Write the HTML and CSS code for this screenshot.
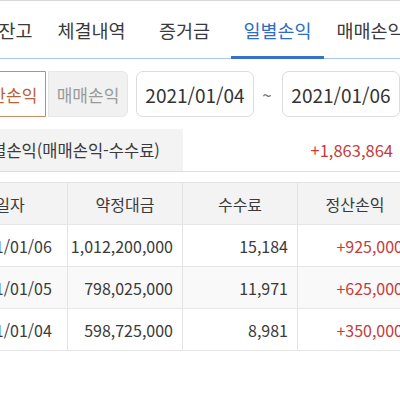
FILE: index.html
```html
<!DOCTYPE html>
<html lang="ko">
<head>
<meta charset="utf-8">
<link rel="stylesheet" href="styles.css">
</head>
<body>
<div class="page">
  <nav class="tabs">
    <div class="tab">주식잔고</div>
    <div class="tab">체결내역</div>
    <div class="tab">증거금</div>
    <div class="tab active">일별손익</div>
    <div class="tab">매매손익</div>
  </nav>
  <div class="filters">
    <div class="seg">
      <div class="seg-btn on">정산손익</div>
      <div class="seg-btn off">매매손익</div>
    </div>
    <div class="date">2021/01/04</div>
    <div class="tilde">~</div>
    <div class="date">2021/01/06</div>
  </div>
  <div class="summary">
    <div class="sum-label">일별손익(매매손익-수수료)</div>
    <div class="sum-value">+1,863,864</div>
  </div>
  <div class="table">
    <div class="row head">
      <div class="c center">일자</div>
      <div class="c center">약정대금</div>
      <div class="c center">수수료</div>
      <div class="c center">정산손익</div>
    </div>
    <div class="row">
      <div class="c center">2021/01/06</div>
      <div class="c num">1,012,200,000</div>
      <div class="c num">15,184</div>
      <div class="c num red">+925,000</div>
    </div>
    <div class="row alt">
      <div class="c center">2021/01/05</div>
      <div class="c num">798,025,000</div>
      <div class="c num">11,971</div>
      <div class="c num red">+625,000</div>
    </div>
    <div class="row">
      <div class="c center">2021/01/04</div>
      <div class="c num">598,725,000</div>
      <div class="c num">8,981</div>
      <div class="c num red">+350,000</div>
    </div>
  </div>
</div>
</body>
</html>
```
FILE: styles.css
```css
html, body {
  margin: 0;
  padding: 0;
  background: #fff;
  overflow: hidden;
}
body {
  font-family: "Noto Sans CJK KR", "Noto Sans", sans-serif;
  color: #3a3a3a;
  width: 400px;
  height: 400px;
}
.page {
  margin-left: -48px;
  width: 470px;
  border-top: 1px solid #d8d8d8;
}
.tabs {
  display: flex;
  height: 57px;
  border-bottom: 1px solid #aac6ea;
}
.tab {
  flex: 0 0 93px;
  display: flex;
  align-items: center;
  justify-content: center;
  font-size: 18.5px;
  color: #3a3a3a;
  box-sizing: border-box;
  white-space: nowrap;
}
.tab.active {
  color: #2e6dc1;
  border-bottom: 3px solid #3673c6;
  margin-bottom: -1px;
  padding-top: 2px;
}
.filters {
  display: flex;
  align-items: center;
  padding: 12px 0 0 14px;
  height: 46px;
}
.seg {
  display: flex;
  height: 46px;
}
.seg-btn {
  width: 80px;
  box-sizing: border-box;
  display: flex;
  align-items: center;
  justify-content: center;
  font-size: 17px;
  white-space: nowrap;
}
.seg-btn.on {
  border: 1px solid #c98a66;
  color: #b5633a;
  border-radius: 6px 0 0 6px;
}
.seg-btn.off {
  margin-left: 2px;
  background: #f1f1f1;
  border: 1px solid #e6e6e6;
  color: #9a9a9a;
  border-radius: 0 6px 6px 0;
}
.date {
  margin-left: 8px;
  width: 118px;
  height: 46px;
  box-sizing: border-box;
  border: 1px solid #dcdcdc;
  border-radius: 7px;
  display: flex;
  align-items: center;
  justify-content: center;
  font-size: 19px;
  color: #333;
}
.tilde {
  width: 20px;
  margin-left: 3px;
  margin-right: -3px;
  text-align: center;
  color: #666;
  font-size: 17px;
}
.summary {
  margin-top: 12px;
  display: flex;
  height: 42px;
  border-bottom: 1px solid #dedede;
  margin-left: 1px;
}
.sum-label {
  width: 230px;
  background: #f3f3f3;
  display: flex;
  align-items: center;
  justify-content: center;
  font-size: 16.5px;
  color: #3a3a3a;
}
.sum-value {
  width: 220px;
  display: flex;
  align-items: center;
  justify-content: flex-end;
  font-size: 16.5px;
  color: #c23d3b;
  padding-right: 10px;
  box-sizing: border-box;
}
.table {
  margin-top: 10px;
  margin-left: 1px;
}
.row {
  display: grid;
  grid-template-columns: 115px 115px 115px 115px;
  height: 42px;
  border-bottom: 1px solid #e6e6e6;
  box-sizing: border-box;
}
.row.head {
  background: #f3f3f3;
  height: 43px;
  border-top: 1px solid #e3e3e3;
}
.row.alt {
  background: #f9f9f9;
}
.c {
  display: flex;
  align-items: center;
  font-size: 16px;
  border-right: 1px solid #e3e3e3;
  box-sizing: border-box;
  color: #3a3a3a;
  white-space: nowrap;
}
.c.center {
  justify-content: center;
}
.c.num {
  justify-content: flex-end;
  padding-right: 9px;
}
.c.red {
  color: #c23d3b;
}
```
